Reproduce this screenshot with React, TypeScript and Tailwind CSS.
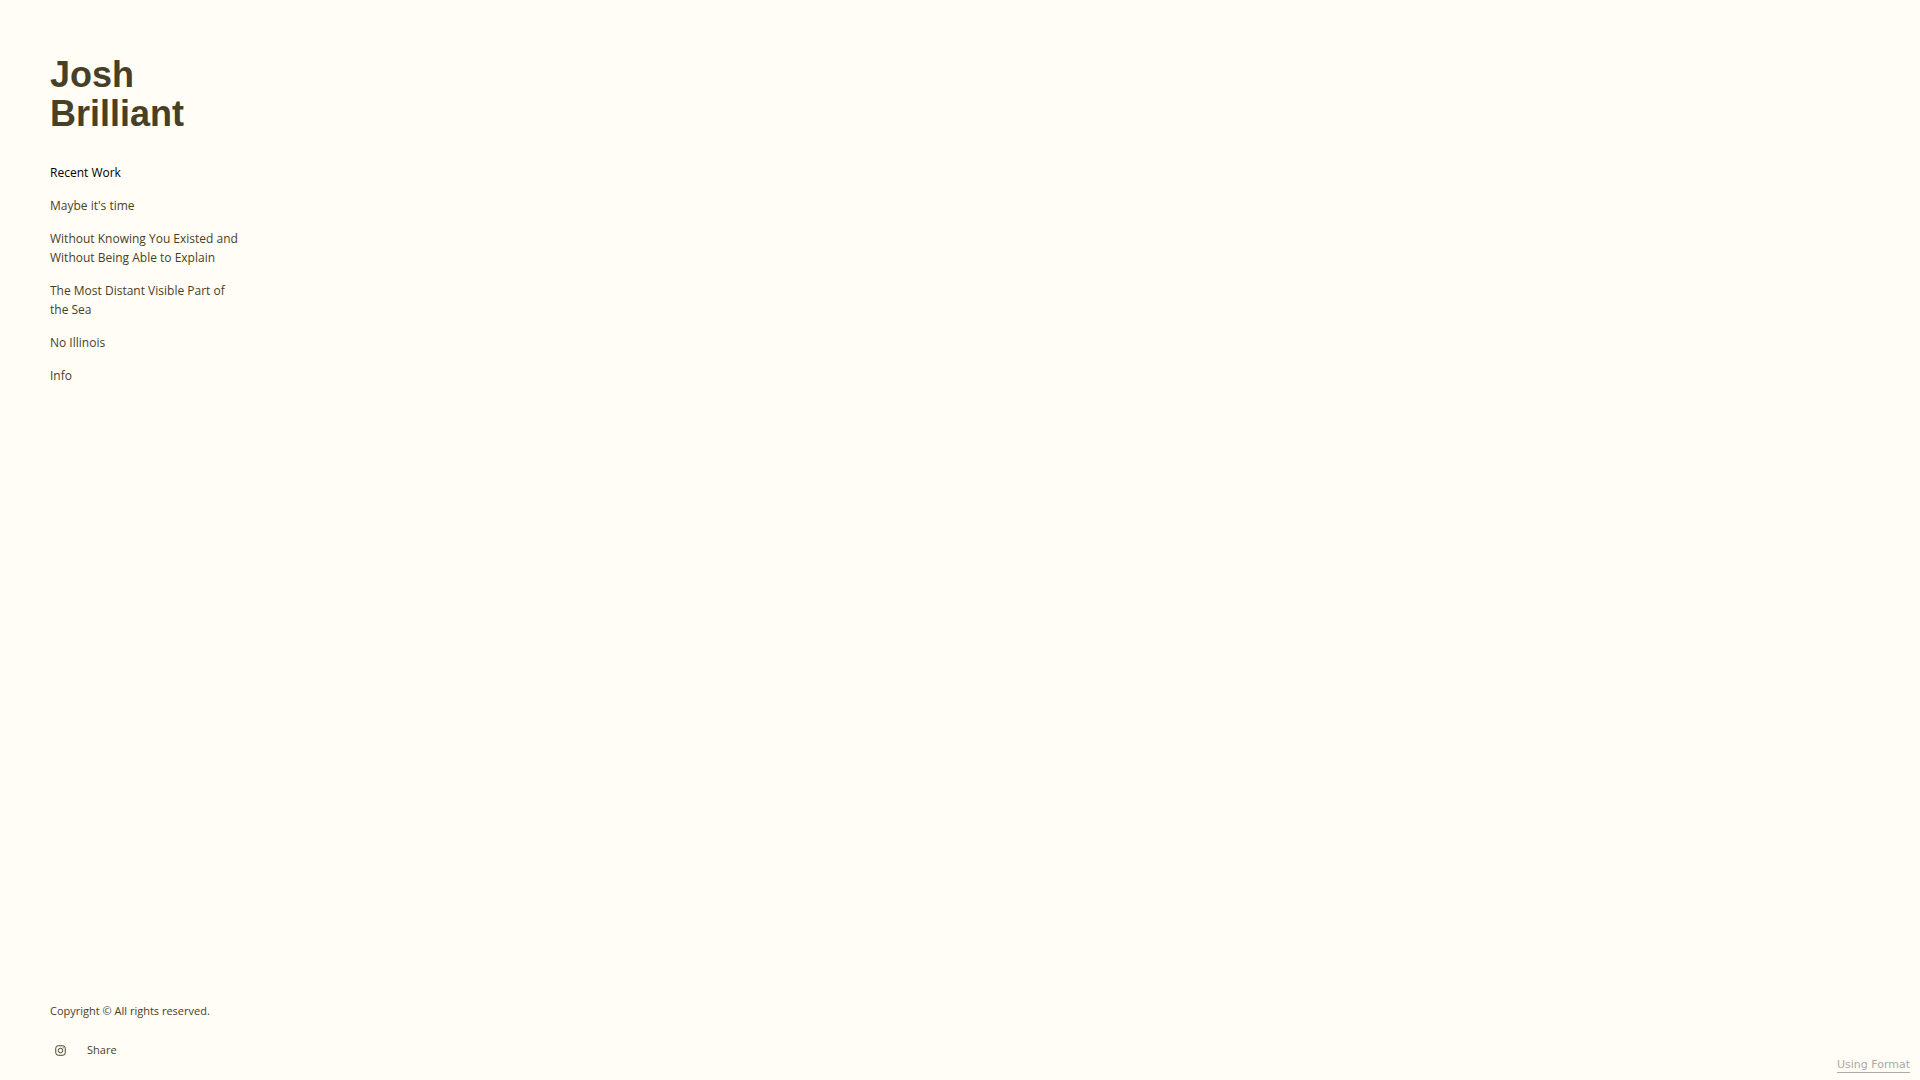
import React from "react";

interface NavItem {
  label: string;
  href: string;
  active?: boolean;
}

const navItems: NavItem[] = [
  { label: "Recent Work", href: "#recent-work", active: true },
  { label: "Maybe it's time", href: "#maybe-its-time" },
  {
    label: "Without Knowing You Existed and Without Being Able to Explain",
    href: "#without-knowing",
  },
  {
    label: "The Most Distant Visible Part of the Sea",
    href: "#distant-sea",
  },
  { label: "No Illinois", href: "#no-illinois" },
  { label: "Info", href: "#info" },
];

const InstagramIcon: React.FC = () => (
  <svg viewBox="0 0 22 22" className="w-[11px] h-[11px]" fill="none" stroke="currentColor" strokeWidth="2">
    <rect x="1.5" y="1.5" width="19" height="19" rx="5" />
    <circle cx="11" cy="11" r="4.5" />
    <circle cx="16.5" cy="5.5" r="1.2" fill="currentColor" stroke="none" />
  </svg>
);

const App: React.FC = () => {
  return (
    <div className="relative min-h-screen flex bg-[#fffdf6] text-[#483f27] font-['Open_Sans',sans-serif]">
      <aside className="w-[290px] flex flex-col justify-between px-[50px] pt-[55px] pb-5">
        <div>
          <h1 className="text-[36px] leading-[39px] font-bold font-['Liberation_Sans',sans-serif]">
            <a href="#home" className="block">
              Josh
              <br />
              Brilliant
            </a>
          </h1>
          <nav className="mt-[30px]">
            <ul className="flex flex-col gap-[14px]">
              {navItems.map((item) => (
                <li key={item.href} className="text-[12px] leading-[19px]">
                  <a href={item.href} className={item.active ? "text-black" : ""}>
                    {item.label}
                  </a>
                </li>
              ))}
            </ul>
          </nav>
        </div>

        <footer className="text-[11px] leading-[20px]">
          <p>Copyright © All rights reserved.</p>
          <div className="flex items-center gap-[21px] mt-[19px] pl-[5px]">
            <a href="#instagram" aria-label="Instagram">
              <InstagramIcon />
            </a>
            <button type="button">Share</button>
          </div>
        </footer>
      </aside>

      <a
        href="#format"
        className="absolute right-[10px] bottom-[7px] text-[11px] leading-[14px] text-[#aaa] border-b border-[#aaa] font-['DejaVu_Sans',sans-serif]"
      >
        Using Format
      </a>
    </div>
  );
};

export default App;
